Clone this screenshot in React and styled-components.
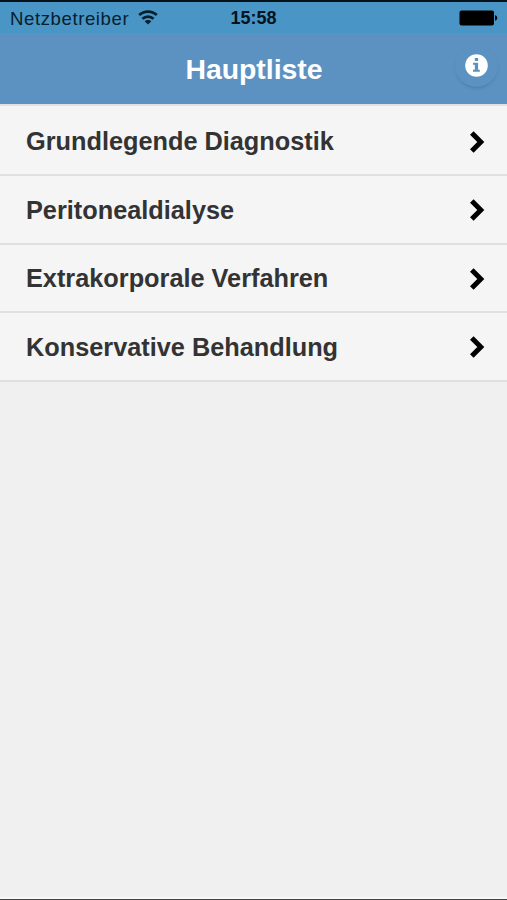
import styled, { createGlobalStyle } from "styled-components"

const items = [
  "Grundlegende Diagnostik",
  "Peritonealdialyse",
  "Extrakorporale Verfahren",
  "Konservative Behandlung",
]

export default function App() {
  return (
    <>
      <GlobalStyle />
      <Screen>
        <StatusBar>
          <Carrier>
            <span>Netzbetreiber</span>
            <WifiIcon />
          </Carrier>
          <Clock>15:58</Clock>
          <BatteryIcon />
        </StatusBar>
        <Header>
          <Title>Hauptliste</Title>
          <InfoButton aria-label="Info">
            <InfoIcon />
          </InfoButton>
        </Header>
        <List>
          {items.map((item) => (
            <Item key={item}>
              <Label>{item}</Label>
              <Chevron />
            </Item>
          ))}
        </List>
        <BottomEdge />
      </Screen>
    </>
  )
}

const WifiIcon = () => (
  <Wifi width="20" height="15" viewBox="0 0 20 15" fill="none" stroke="#06202e" strokeWidth="2.7">
    <path d="M1.2 5C6 .4 14 .4 18.8 5" />
    <path d="M4.4 8.7c3.200-2.900 8-2.900 11.200 0" />
    <path d="M10 14.600l-3.400-3.400c1.900-1.700 4.900-1.700 6.800 0z" fill="#06202e" stroke="none" />
  </Wifi>
)

const BatteryIcon = () => (
  <Battery width="39" height="16" viewBox="0 0 39 16">
    <rect x=".5" y=".5" width="34.5" height="15" rx="2" />
    <path d="M36 5.3c3 .4 3 5 0 5.4z" />
  </Battery>
)

const InfoIcon = () => (
  <svg width="23" height="23" viewBox="0 0 23 23">
    <circle cx="11.5" cy="11.5" r="11.3" fill="#fff" />
    <path
      d="M9.8 3.900h3.300v3H9.800zM8 8.700h5.100v7h1.700v2H8v-2h1.800v-5H8z"
      fill="#5b92c2"
    />
  </svg>
)

const Chevron = () => (
  <svg width="16" height="24" viewBox="0 0 16 24" fill="none" stroke="#000" strokeWidth="5">
    <path d="M2.800 2.900L11.800 12L2.800 21.100" />
  </svg>
)

const GlobalStyle = createGlobalStyle`
  * {
    box-sizing: border-box;
  }
  body {
    margin: 0;
    background: #f0f0f0;
    font-family: "Liberation Sans", Arial, sans-serif;
  }
`

const Screen = styled.div`
  display: flex;
  flex-direction: column;
  width: 507px;
  height: 900px;
  overflow: hidden;
  background: #f0f0f0;
`

const StatusBar = styled.div`
  display: grid;
  grid-template-columns: 1fr auto 1fr;
  align-items: center;
  height: 33px;
  padding: 0 9px 0 10px;
  border-top: 2px solid #05121a;
  background: #4996c6;
  color: #06202e;
  font-size: 18.6px;
  line-height: 33px;
`

const Carrier = styled.div`
  display: flex;
  align-items: center;
  gap: 9px;
  letter-spacing: 0.58px;
`

const Wifi = styled.svg`
  margin-bottom: 2px;
`

const Clock = styled.div`
  margin-left: -1px;
  color: #04131c;
  font-weight: bold;
  font-size: 18px;
`

const Battery = styled.svg`
  justify-self: end;
  margin-bottom: 1px;
`

const Header = styled.header`
  display: grid;
  grid-template-columns: 1fr auto 1fr;
  align-items: center;
  height: 71px;
  padding-right: 9px;
  background: #5b92c2;
`

const Title = styled.h1`
  grid-column: 2;
  margin: 0 -5px 0 5px;
  color: #fff;
  font-size: 28.4px;
  line-height: 72px;
`

const InfoButton = styled.button`
  display: flex;
  justify-content: center;
  align-items: center;
  justify-self: end;
  width: 43px;
  height: 43px;
  margin-bottom: 8px;
  padding: 0;
  border: 0;
  border-radius: 50%;
  background: transparent;
  box-shadow: 0 2px 3px -1px rgba(40, 80, 120, 0.35);
`

const List = styled.ul`
  margin: 0;
  padding: 1.6px 0 0;
  border-top: 2px solid #dfe2e4;
  background: #f5f5f5;
  list-style: none;
`

const Item = styled.li`
  display: flex;
  justify-content: space-between;
  align-items: center;
  height: 68.5px;
  padding: 1.4px 22px 0 26px;
  border-bottom: 2px solid #e0e0e0;
  background: #f5f5f5;
`

const Label = styled.span`
  color: #333;
  font-size: 25.3px;
  font-weight: bold;
`

const BottomEdge = styled.div`
  height: 3px;
  margin-top: auto;
  border-top: 2px solid #f8f8f8;
  border-bottom: 1px solid #444;
`
